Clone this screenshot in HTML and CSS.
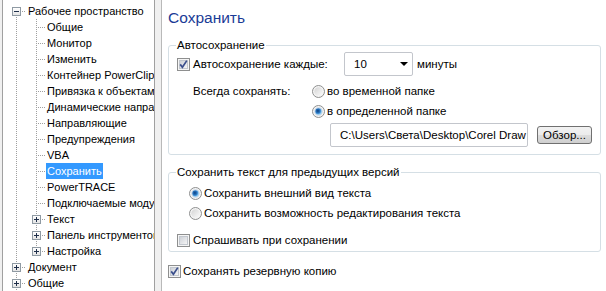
FILE: index.html
```html
<!DOCTYPE html>
<html lang="ru">
<head>
  <meta charset="UTF-8">
  <title>Параметры - Сохранить</title>
  <link rel="stylesheet" href="styles.css">
</head>
<body>
  <svg class="defs" width="0" height="0" aria-hidden="true">
    <defs>
      <linearGradient id="cbFill" x1="0" y1="0" x2="1" y2="1">
        <stop offset="0" stop-color="#cbcfd5"/>
        <stop offset="1" stop-color="#f7f7f7"/>
      </linearGradient>
      <linearGradient id="rbFill" x1="0" y1="0" x2="1" y2="1">
        <stop offset="0" stop-color="#d4d4d4"/>
        <stop offset="1" stop-color="#fbfbfb"/>
      </linearGradient>
      <radialGradient id="rbDot" cx="0.4" cy="0.4" r="0.6">
        <stop offset="0" stop-color="#0b3f7e"/>
        <stop offset="0.6" stop-color="#2c7ac6"/>
        <stop offset="1" stop-color="#8fd0f7"/>
      </radialGradient>
      <symbol id="cb" viewBox="0 0 13 13">
        <rect x="0.5" y="0.5" width="12" height="12" fill="#f5f5f5" stroke="#8e8f8f"/>
        <rect x="2.5" y="2.5" width="8" height="8" fill="url(#cbFill)" stroke="#c2c7ce"/>
      </symbol>
      <symbol id="cbOn" viewBox="0 0 13 13">
        <rect x="0.5" y="0.5" width="12" height="12" fill="#f5f5f5" stroke="#8e8f8f"/>
        <rect x="2.5" y="2.5" width="8" height="8" fill="url(#cbFill)" stroke="#c2c7ce"/>
        <path d="M3.2 6.4 L5.4 9.2 L9.8 2.6" fill="none" stroke="#3b4f8c" stroke-width="1.7"/>
      </symbol>
      <symbol id="rb" viewBox="0 0 13 13">
        <circle cx="6.5" cy="6.5" r="6" fill="#f4f4f4" stroke="#8e8f8f"/>
        <circle cx="6.5" cy="6.5" r="4.2" fill="url(#rbFill)"/>
      </symbol>
      <symbol id="rbOn" viewBox="0 0 13 13">
        <circle cx="6.5" cy="6.5" r="6" fill="#f4f4f4" stroke="#8e8f8f"/>
        <circle cx="6.5" cy="6.5" r="4.2" fill="#c9d6e4"/>
        <circle cx="6.5" cy="6.5" r="3.2" fill="url(#rbDot)"/>
      </symbol>
    </defs>
  </svg>

  <div class="tree">
    <div class="node"><span class="cell c-first"><span class="box minus"></span></span><span class="label root">Рабочее пространство</span></div>
    <div class="node"><span class="cell c-line"></span><span class="cell c-tee"></span><span class="label">Общие</span></div>
    <div class="node"><span class="cell c-line"></span><span class="cell c-tee"></span><span class="label">Монитор</span></div>
    <div class="node"><span class="cell c-line"></span><span class="cell c-tee"></span><span class="label">Изменить</span></div>
    <div class="node"><span class="cell c-line"></span><span class="cell c-tee"></span><span class="label">Контейнер PowerClip</span></div>
    <div class="node"><span class="cell c-line"></span><span class="cell c-tee"></span><span class="label">Привязка к объектам</span></div>
    <div class="node"><span class="cell c-line"></span><span class="cell c-tee"></span><span class="label">Динамические направляющие</span></div>
    <div class="node"><span class="cell c-line"></span><span class="cell c-tee"></span><span class="label">Направляющие</span></div>
    <div class="node"><span class="cell c-line"></span><span class="cell c-tee"></span><span class="label">Предупреждения</span></div>
    <div class="node"><span class="cell c-line"></span><span class="cell c-tee"></span><span class="label">VBA</span></div>
    <div class="node"><span class="cell c-line"></span><span class="cell c-tee"></span><span class="label selected">Сохранить</span></div>
    <div class="node"><span class="cell c-line"></span><span class="cell c-tee"></span><span class="label">PowerTRACE</span></div>
    <div class="node"><span class="cell c-line"></span><span class="cell c-tee"></span><span class="label">Подключаемые модули</span></div>
    <div class="node"><span class="cell c-line"></span><span class="cell c-tee"><span class="box plus"></span></span><span class="label">Текст</span></div>
    <div class="node"><span class="cell c-line"></span><span class="cell c-tee"><span class="box plus"></span></span><span class="label">Панель инструментов</span></div>
    <div class="node"><span class="cell c-line"></span><span class="cell c-last"><span class="box plus"></span></span><span class="label">Настройка</span></div>
    <div class="node"><span class="cell c-tee"><span class="box plus"></span></span><span class="label root">Документ</span></div>
    <div class="node"><span class="cell c-tee"><span class="box plus"></span></span><span class="label root">Общие</span></div>
  </div>

  <main class="page">
    <h1 class="title">Сохранить</h1>

    <fieldset class="group autosave">
      <legend>Автосохранение</legend>
      <div class="auto-row">
        <svg class="check"><use href="#cbOn"/></svg>
        <span class="auto-label">Автосохранение каждые:</span>
        <div class="combo"><span>10</span><span class="arrow"></span></div>
        <span class="unit">минуты</span>
      </div>
      <div class="opt-row opt-top">
        <span class="opt-label">Всегда сохранять:</span>
        <svg class="radio"><use href="#rb"/></svg>
        <span class="radio-text">во временной папке</span>
      </div>
      <div class="opt-row">
        <span class="opt-label"></span>
        <svg class="radio"><use href="#rbOn"/></svg>
        <span class="radio-text">в определенной папке</span>
      </div>
      <div class="path-row">
        <div class="path"><span>C:\Users\Света\Desktop\Corel Draw Уроки</span></div>
        <button class="btn" type="button">Обзор...</button>
      </div>
    </fieldset>

    <fieldset class="group legacy">
      <legend>Сохранить текст для предыдущих версий</legend>
      <div class="opt2 opt-top">
        <svg class="radio"><use href="#rbOn"/></svg>
        <span class="radio-text">Сохранить внешний вид текста</span>
      </div>
      <div class="opt2">
        <svg class="radio"><use href="#rb"/></svg>
        <span class="radio-text">Сохранить возможность редактирования текста</span>
      </div>
      <div class="check-row">
        <svg class="check"><use href="#cb"/></svg>
        <span class="check-text">Спрашивать при сохранении</span>
      </div>
    </fieldset>

    <div class="check-row backup">
      <svg class="check"><use href="#cbOn"/></svg>
      <span class="check-text">Сохранять резервную копию</span>
    </div>
  </main>
</body>
</html>
```

FILE: styles.css
```css
body {
  margin: 0;
  height: 291px;
  overflow: hidden;
  display: flex;
  background: #f0f0f0;
  font-family: "Liberation Sans", Arial, sans-serif;
  font-size: 11.5px;
  color: #000;
}
.defs {
  display: block;
  width: 0;
  height: 0;
}

/* tree */
.tree {
  box-sizing: border-box;
  width: 153px;
  margin-left: 2px;
  padding: 3px 0 0 3px;
  border-left: 1px solid #a0a0a0;
  border-right: 1px solid #a0a0a0;
  background: #fff;
  overflow: hidden;
  flex: none;
  font-size: 11px;
}
.node {
  display: flex;
  height: 16px;
  align-items: center;
  white-space: nowrap;
}
.cell {
  flex: none;
  width: 20px;
  height: 16px;
  display: flex;
  align-items: center;
  padding-left: 6px;
  box-sizing: border-box;
  background-repeat: no-repeat;
}
.c-line {
  background-image: repeating-linear-gradient(to bottom, #a0a0a0 0 1px, transparent 1px 2px);
  background-position: 10px 0;
  background-size: 1px 16px;
}
.c-tee, .c-last, .c-first {
  background-image:
    repeating-linear-gradient(to bottom, #a0a0a0 0 1px, transparent 1px 2px),
    repeating-linear-gradient(to right, #a0a0a0 0 1px, transparent 1px 2px);
}
.c-tee {
  background-position: 10px 0, 12px 8px;
  background-size: 1px 16px, 8px 1px;
}
.c-last {
  background-position: 10px 0, 12px 8px;
  background-size: 1px 9px, 8px 1px;
}
.c-first {
  background-position: 10px 8px, 12px 8px;
  background-size: 1px 8px, 8px 1px;
}
.box {
  width: 9px;
  height: 9px;
  box-sizing: border-box;
  border: 1px solid #8f9aa3;
  background-color: #fff;
  background-repeat: no-repeat;
  background-position: center;
}
.minus {
  background-image:
    linear-gradient(#1f2f4a, #1f2f4a),
    linear-gradient(#fff, #e4e4e4);
  background-size: 5px 1px, 100% 100%;
}
.plus {
  background-image:
    linear-gradient(#1f2f4a, #1f2f4a),
    linear-gradient(#1f2f4a, #1f2f4a),
    linear-gradient(#fff, #e4e4e4);
  background-size: 5px 1px, 1px 5px, 100% 100%;
}
.label {
  padding: 0 1px;
  line-height: 16px;
}
.root {
  padding-left: 2px;
}
.selected {
  background: #3399ff;
  color: #fff;
}

/* page */
.page {
  flex: 1;
  margin-left: 6px;
  padding: 0 8px 0 6px;
  background: #fff;
  border-left: 1px solid #b9b9b9;
}
.title {
  margin: 0 0 10px;
  padding-top: 8px;
  height: 20px;
  line-height: 20px;
  font-size: 15.5px;
  font-weight: normal;
  color: #1a3b96;
}
.group {
  margin: 0;
  min-width: 0;
  padding: 0 8px 7px 8px;
  border: 1px solid #d5dfe5;
  border-radius: 3px;
}
.group legend {
  padding: 0 1px;
  margin-left: -1px;
  line-height: 14px;
}
.legacy {
  margin-top: 10px;
  padding-bottom: 2px;
}
.check, .radio {
  width: 13px;
  height: 13px;
  flex: none;
}

.auto-row {
  display: flex;
  align-items: center;
  height: 24px;
}
.auto-label {
  width: 151px;
  margin-left: 3px;
}
.combo {
  box-sizing: border-box;
  width: 69px;
  height: 24px;
  padding: 0 4px 0 9px;
  display: flex;
  align-items: center;
  justify-content: space-between;
  border: 1px solid #c3c6cc;
  border-radius: 2px;
}
.arrow {
  width: 0;
  height: 0;
  border-left: 4px solid transparent;
  border-right: 4px solid transparent;
  border-top: 4px solid #000;
}
.unit {
  margin-left: 4px;
}

.opt-row {
  display: flex;
  align-items: center;
  height: 20px;
}
.opt-row.opt-top {
  margin-top: 5px;
}
.opt-label {
  width: 119px;
  margin-left: 16px;
  flex: none;
}
.radio-text {
  margin-left: 2px;
}
.path-row {
  display: flex;
  align-items: center;
  margin-top: 2px;
  padding-left: 153px;
}
.path {
  box-sizing: border-box;
  width: 198px;
  height: 24px;
  line-height: 22px;
  padding-left: 9px;
  border: 1px solid #c3c6cc;
  border-radius: 2px;
  white-space: nowrap;
  overflow: hidden;
}
.btn {
  box-sizing: border-box;
  width: 55px;
  height: 18px;
  margin-left: 9px;
  padding: 0;
  font: inherit;
  color: #000;
  border: 1px solid #707070;
  border-radius: 3px;
  background: linear-gradient(#f2f2f2 0, #ebebeb 50%, #dddddd 50%, #cfcfcf 100%);
}

.opt2 {
  display: flex;
  align-items: center;
  height: 20px;
  padding-left: 12px;
}
.opt2.opt-top {
  margin-top: 4px;
}
.check-row {
  display: flex;
  align-items: center;
  height: 18px;
  margin-top: 8px;
}
.check-text {
  margin-left: 3px;
}
.backup {
  margin-top: 10px;
}
.backup .check-text {
  margin-left: 2px;
}
```
